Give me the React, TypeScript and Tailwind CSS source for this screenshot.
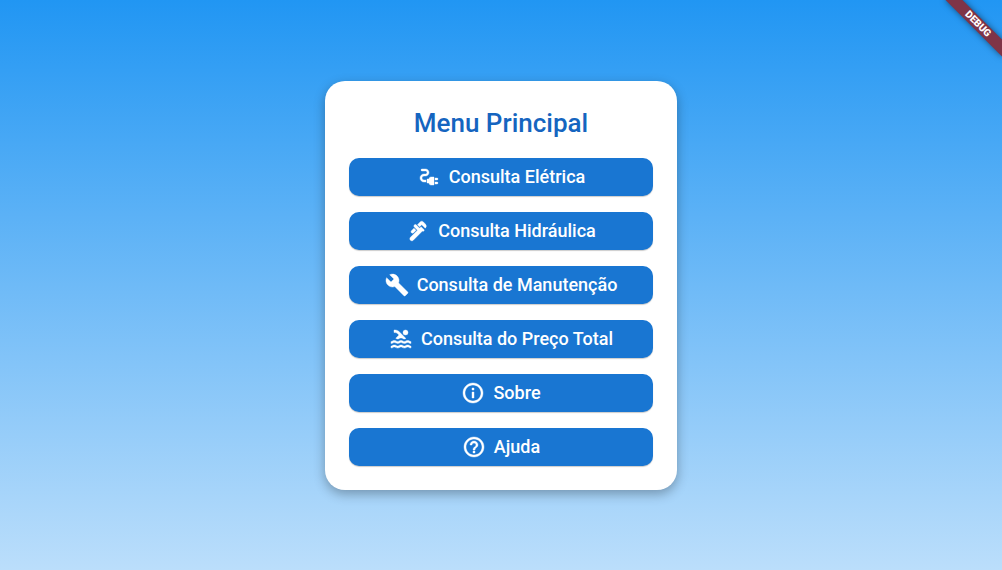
import type { IconType } from "react-icons";
import {
  MdBuild,
  MdElectricalServices,
  MdHelpOutline,
  MdInfoOutline,
  MdPlumbing,
  MdPool,
} from "react-icons/md";

const items: { label: string; icon: IconType }[] = [
  { label: "Consulta Elétrica", icon: MdElectricalServices },
  { label: "Consulta Hidráulica", icon: MdPlumbing },
  { label: "Consulta de Manutenção", icon: MdBuild },
  { label: "Consulta do Preço Total", icon: MdPool },
  { label: "Sobre", icon: MdInfoOutline },
  { label: "Ajuda", icon: MdHelpOutline },
];

function MenuButton({ label, icon: Icon }: { label: string; icon: IconType }) {
  return (
    <button
      type="button"
      className="flex h-[38px] w-full items-center justify-center gap-2 rounded-[10px] bg-[#1976d2] text-lg font-medium text-white shadow-[0_1px_1px_rgba(0,0,0,0.2)] hover:bg-[#1e7bd6]"
    >
      <Icon
        className="size-6 shrink-0 [&>path[fill=none]]:hidden"
        strokeWidth="0.4"
        aria-hidden="true"
      />
      {label}
    </button>
  );
}

function DebugBanner() {
  return (
    <div className="pointer-events-none absolute -right-4 top-[18px] flex h-3 w-20 rotate-45 items-center justify-center bg-[#7f3447] text-[10px] leading-3 font-black text-white shadow-[0_0_6px_rgba(0,0,0,0.5)]">
      DEBUG
    </div>
  );
}

export default function App() {
  return (
    <div className="relative flex min-h-screen items-center justify-center overflow-hidden bg-linear-to-b/srgb from-[#2196f3] to-[#bbdefb] font-['Roboto',sans-serif]">
      <main className="flex w-full max-w-[352px] flex-col items-center rounded-[20px] bg-white p-6 shadow-[0_4px_12px_rgba(0,0,0,0.3)]">
        <h1 className="mb-4 text-[26px] leading-[37px] font-medium text-[#1565c0]">
          Menu Principal
        </h1>
        <nav aria-label="Menu Principal" className="flex w-full flex-col gap-4">
          {items.map((item) => (
            <MenuButton key={item.label} {...item} />
          ))}
        </nav>
      </main>
      <DebugBanner />
    </div>
  );
}
